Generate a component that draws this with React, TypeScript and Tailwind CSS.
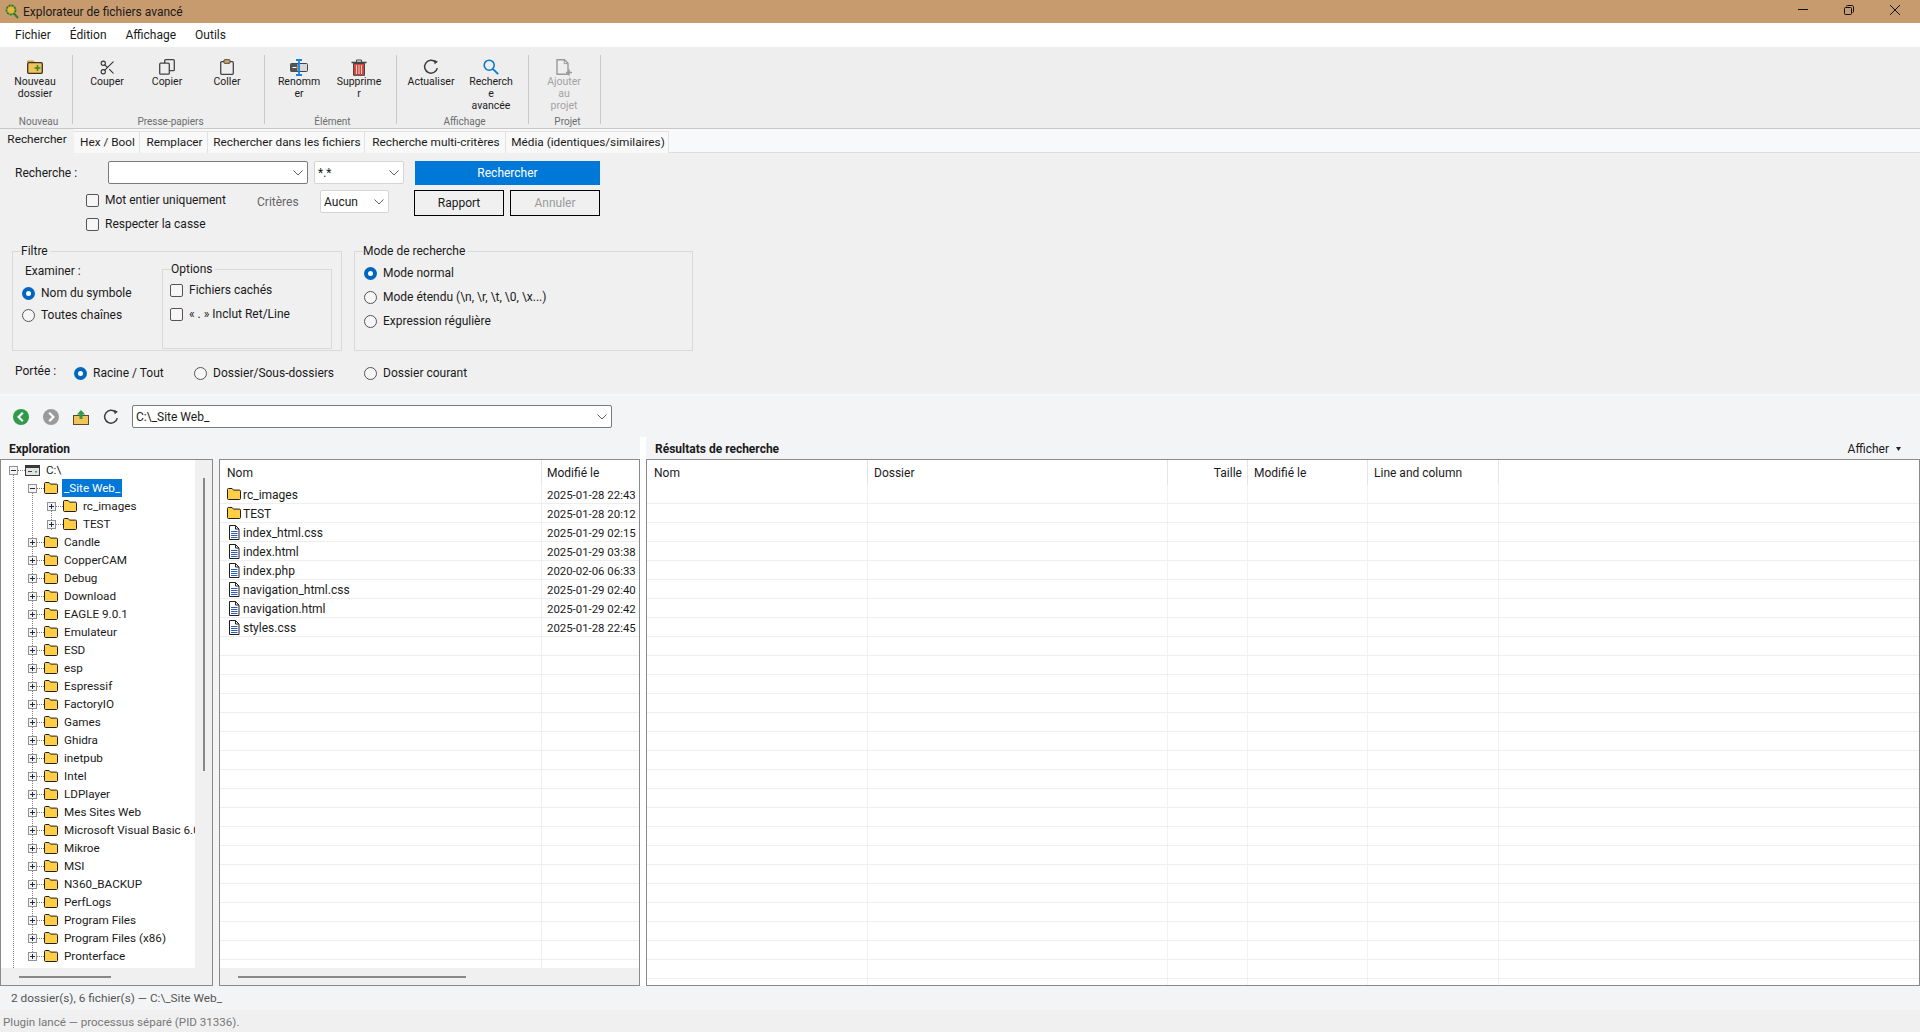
import React from "react";
import { Scissors } from "lucide-react";

const treeFolders = [
  "Candle",
  "CopperCAM",
  "Debug",
  "Download",
  "EAGLE 9.0.1",
  "Emulateur",
  "ESD",
  "esp",
  "Espressif",
  "FactoryIO",
  "Games",
  "Ghidra",
  "inetpub",
  "Intel",
  "LDPlayer",
  "Mes Sites Web",
  "Microsoft Visual Basic 6.0",
  "Mikroe",
  "MSI",
  "N360_BACKUP",
  "PerfLogs",
  "Program Files",
  "Program Files (x86)",
  "Pronterface",
];

const listRows = [
  { name: "rc_images", date: "2025-01-28 22:43", folder: true },
  { name: "TEST", date: "2025-01-28 20:12", folder: true },
  { name: "index_html.css", date: "2025-01-29 02:15" },
  { name: "index.html", date: "2025-01-29 03:38" },
  { name: "index.php", date: "2020-02-06 06:33" },
  { name: "navigation_html.css", date: "2025-01-29 02:40" },
  { name: "navigation.html", date: "2025-01-29 02:42" },
  { name: "styles.css", date: "2025-01-28 22:45" },
];

const levelPad = ["pl-[8px]", "pl-[27px]", "pl-[46px]"];

function Chevron() {
  return (
    <svg width="10" height="6" viewBox="0 0 10 6" className="shrink-0">
      <path d="M.5.5 5 5 9.500.5" fill="none" stroke="#606060" />
    </svg>
  );
}

function FolderIcon() {
  return (
    <svg width="14" height="12" viewBox="0 0 14 12" className="shrink-0">
      <path d="M.5 1.500c0-.6.4-1 1-1h3.600l1.400 1.600h6c.6 0 1 .4 1 1v7.400c0 .6-.4 1-1 1h-11c-.6 0-1-.4-1-1z" fill="#FFCE45" stroke="#1f1f1f" />
    </svg>
  );
}

function FileIcon() {
  return (
    <svg width="12" height="15" viewBox="0 0 12 15" className="shrink-0">
      <path d="M1.500.5h6l3.500 3.500v10.500H1.500z" fill="#fff" stroke="#1f1f1f" />
      <path d="M7.500.5V4H11" fill="none" stroke="#1f1f1f" />
      <path d="M3 6.500h6.500M3 8.500h6.500M3 10.500h6.500M3 12.500h6.500" stroke="#2F5BB7" />
    </svg>
  );
}

function DriveIcon() {
  return (
    <svg width="15" height="11" viewBox="0 0 15 11" className="shrink-0">
      <rect x="0" y="0" width="15" height="3" fill="#3a3a3a" />
      <rect x=".5" y="2.500" width="14" height="8" fill="#e4e4e4" stroke="#3a3a3a" />
      <path d="M3 6.500h4" stroke="#444" />
      <rect x="10" y="6" width="2" height="1.500" fill="#3aa655" />
    </svg>
  );
}

function Expander({ open }: { open?: boolean }) {
  return (
    <svg width="9" height="9" viewBox="0 0 9 9" className="shrink-0">
      <rect x=".5" y=".5" width="8" height="8" fill="#f4f4f4" stroke="#929292" />
      <path d="M2 4.500h5" stroke="#1f2a44" />
      {!open && <path d="M4.500 2v5" stroke="#1f2a44" />}
    </svg>
  );
}

function RefreshIcon({ size = 16 }: { size?: number }) {
  return (
    <svg width={size} height={size} viewBox="0 0 15 15">
      <path d="M11.800 3A6 6 0 1 0 13.400 8.500" fill="none" stroke="#3c3c3c" strokeWidth="1.400" />
      <path d="M10.600 .6 14 2.600 10.800 5z" fill="#3c3c3c" />
    </svg>
  );
}

function ToolIcon({ name }: { name: string }) {
  if (name === "new")
    return (
      <svg width="16" height="14" viewBox="0 0 16 14">
        <path d="M.5 2V1h6l1 1.500" fill="#E8B64C" stroke="#C99A3A" />
        <rect x=".7" y="2.700" width="14.600" height="10.600" rx="1" fill="#F2C35A" stroke="#3a3222" strokeWidth="1.300" />
        <path d="M10.500 5v6M7.500 8h6" stroke="#2E8B2E" strokeWidth="1.600" />
      </svg>
    );
  if (name === "cut") return <Scissors size={17} strokeWidth={1.5} color="#333" />;
  if (name === "copy")
    return (
      <svg width="16" height="16" viewBox="0 0 16 16">
        <rect x="5.700" y=".7" width="9.600" height="11" rx="1" fill="none" stroke="#444" strokeWidth="1.300" />
        <rect x=".7" y="4.200" width="9.600" height="11" rx="1" fill="#eeeeee" stroke="#444" strokeWidth="1.300" />
      </svg>
    );
  if (name === "paste")
    return (
      <svg width="14" height="16" viewBox="0 0 14 16">
        <rect x=".7" y="2.700" width="12.600" height="12.600" rx="1" fill="none" stroke="#444" strokeWidth="1.300" />
        <rect x="4" y=".7" width="6" height="3.600" rx=".6" fill="#D9A95A" stroke="#444" />
      </svg>
    );
  if (name === "rename")
    return (
      <svg width="18" height="17" viewBox="0 0 18 17">
        <rect x=".5" y="4.500" width="17" height="8" rx="1" fill="#d8d8d8" stroke="#444" />
        <rect x=".5" y="4.500" width="7" height="8" fill="#555" />
        <path d="M2.500 8.500h4" stroke="#fff" />
        <path d="M6 1h6M6 16h6M9 1v15" stroke="#1683E0" strokeWidth="1.800" fill="none" />
      </svg>
    );
  if (name === "trash")
    return (
      <svg width="16" height="17" viewBox="0 0 16 17">
        <path d="M.5 3.500h15" stroke="#444" strokeWidth="1.600" />
        <path d="M5.500 3V1h5v2" fill="none" stroke="#444" />
        <path d="M2.500 4.500h11v11.800h-11z" fill="#D8453C" stroke="#444" />
        <path d="M5.500 6v9M8 6v9M10.500 6v9" stroke="#f2d0cc" />
      </svg>
    );
  if (name === "search")
    return (
      <svg width="16" height="16" viewBox="0 0 16 16">
        <circle cx="6.200" cy="6.200" r="5" fill="none" stroke="#0B78D0" strokeWidth="1.600" />
        <path d="m9.800 9.800 5.400 5.400" stroke="#0B78D0" strokeWidth="1.800" />
      </svg>
    );
  if (name === "add")
    return (
      <svg width="17" height="17" viewBox="0 0 17 17">
        <path d="M1 .8h7.500L12 4.300v10.900H1z" fill="none" stroke="#9a9a9a" strokeWidth="1.400" />
        <path d="M8.200 1v3.600H12" fill="none" stroke="#9a9a9a" />
        <path d="M13 10.500v6M10 13.500h6" stroke="#9a9a9a" strokeWidth="1.600" />
      </svg>
    );
  return <RefreshIcon />;
}

function ToolButton({ icon, lines, disabled }: { icon: string; lines: string[]; disabled?: boolean }) {
  return (
    <div className={`w-[60px] pt-[3px] flex flex-col items-center text-[10.5px] leading-[12px] ${disabled ? "text-[#a3a3a3]" : "text-[#1c1c1c]"}`}>
      <div className="h-[18px] flex items-center justify-center">
        <ToolIcon name={icon} />
      </div>
      {lines.map((l) => (
        <div key={l} className="text-center whitespace-nowrap">
          {l}
        </div>
      ))}
    </div>
  );
}

function ToolGroup({ label, pad, children }: { label: string; pad: string; children: React.ReactNode }) {
  return (
    <div className={`h-[69px] border-r border-[#c8c8c8] flex flex-col ${pad}`}>
      <div className="h-[60px] shrink-0 flex">{children}</div>
      <div className="h-[14px] shrink-0 pl-[7px] text-center text-[10px] leading-[14px] text-[#6d6d6d]">{label}</div>
    </div>
  );
}

function Combo({ width, text, dark }: { width: string; text?: string; dark?: boolean }) {
  return (
    <div className={`${width} h-[23px] flex items-center justify-between pl-[3px] pr-[4px] bg-white rounded-[2px] border ${dark ? "border-[#7a7a7a]" : "border-[#d4d4d4]"}`}>
      <span className="leading-[16px]">{text}</span>
      <Chevron />
    </div>
  );
}

function Check({ label }: { label: string }) {
  return (
    <div className="flex items-center h-[16px]">
      <div className="w-[13px] h-[13px] rounded-[2px] border border-[#555] bg-[#f6f6f6] mr-[6px]" />
      <span>{label}</span>
    </div>
  );
}

function Radio({ label, checked }: { label: string; checked?: boolean }) {
  return (
    <div className="flex items-center h-[16px]">
      {checked ? (
        <div className="w-[13px] h-[13px] rounded-full bg-[#0067C0] mr-[6px] flex items-center justify-center">
          <div className="w-[5px] h-[5px] rounded-full bg-white" />
        </div>
      ) : (
        <div className="w-[13px] h-[13px] rounded-full border border-[#555] bg-[#f6f6f6] mr-[6px]" />
      )}
      <span>{label}</span>
    </div>
  );
}

function GroupBox({ label, className, children }: { label: string; className: string; children: React.ReactNode }) {
  return (
    <div className={`relative border border-[#d9d9d9] ${className}`}>
      <span className="absolute left-[8px] top-[-9px] bg-[#f0f0f0] pr-[2px] leading-[16px]">{label}</span>
      {children}
    </div>
  );
}

function Tab({ label, width, active }: { label: string; width: string; active?: boolean }) {
  return active ? (
    <div className={`${width} h-[24px] bg-[#f0f0f0] leading-[21px] text-center shrink-0`}>{label}</div>
  ) : (
    <div className={`${width} h-[22px] mt-[2px] pl-[2px] bg-[#f9f9f9] border-t border-r border-[#e2e2e2] leading-[21px] text-center shrink-0 whitespace-nowrap`}>{label}</div>
  );
}

function TreeRow({ level, label, open, selected, icon }: { level: number; label: string; open?: boolean; selected?: boolean; icon?: React.ReactNode }) {
  return (
    <div className={`h-[18px] flex items-center whitespace-nowrap text-[11.7px] ${levelPad[level]}`}>
      <Expander open={open} />
      <div className="w-[7px] border-t border-dotted border-[#808080] shrink-0" />
      {icon ?? <FolderIcon />}
      <span className={`ml-[4px] px-[2px] leading-[18px] ${selected ? "bg-[#0078D7] text-white" : ""}`}>{label}</span>
    </div>
  );
}

function HScroll({ thumb }: { thumb: string }) {
  return (
    <div className="h-[17px] shrink-0 bg-[#f0f0f0] flex items-center">
      <div className={`h-[2px] bg-[#888888] ${thumb}`} />
    </div>
  );
}

function Tree() {
  return (
    <div className="w-[213px] h-full border border-[#8a8a8a] bg-white flex flex-col shrink-0">
      <div className="flex flex-1 min-h-0">
        <div className="relative w-[194px] pt-[1px] overflow-hidden">
          <div className="absolute left-[12px] top-[15px] bottom-0 border-l border-dotted border-[#808080]" />
          <div className="absolute left-[31px] top-[33px] bottom-[8px] border-l border-dotted border-[#808080]" />
          <div className="absolute left-[50px] top-[42px] h-[28px] border-l border-dotted border-[#808080]" />
          <div className="relative">
            <TreeRow level={0} label="C:\" open icon={<DriveIcon />} />
            <TreeRow level={1} label="_Site Web_" open selected />
            <TreeRow level={2} label="rc_images" />
            <TreeRow level={2} label="TEST" />
            {treeFolders.map((f) => (
              <TreeRow key={f} level={1} label={f} />
            ))}
          </div>
        </div>
        <div className="w-[17px] bg-[#f0f0f0] pt-[18px] flex justify-center">
          <div className="w-[2px] h-[293px] bg-[#888888]" />
        </div>
      </div>
      <HScroll thumb="ml-[18px] w-[92px]" />
    </div>
  );
}

function FileList() {
  const blanks = Array.from({ length: 18 }, (_, i) => i);
  return (
    <div className="w-[421px] h-full ml-[6px] border border-[#8a8a8a] bg-white flex flex-col">
      <div className="h-[25px] shrink-0 flex leading-[27px]">
        <div className="w-[322px] h-full pl-[7px] border-r border-[#e5e5e5]">Nom</div>
        <div className="pl-[5px]">Modifié le</div>
      </div>
      <div className="flex-1 min-h-0 overflow-hidden">
        {listRows.map((r) => (
          <div key={r.name} className="h-[19px] flex border-b border-[#eeeeee]">
            <div className="w-[322px] flex items-center pl-[5px] border-r border-[#eeeeee]">
              <div className="w-[18px] pr-[1px] flex justify-center shrink-0">{r.folder ? <FolderIcon /> : <FileIcon />}</div>
              <span className="pt-[1px]">{r.name}</span>
            </div>
            <div className="pl-[5px] text-[11.4px] leading-[20px] whitespace-nowrap">{r.date}</div>
          </div>
        ))}
        {blanks.map((i) => (
          <div key={i} className="h-[19px] flex border-b border-[#eeeeee]">
            <div className="w-[322px] border-r border-[#eeeeee]" />
          </div>
        ))}
      </div>
      <HScroll thumb="ml-[18px] w-[228px]" />
    </div>
  );
}

function Results() {
  const rows = Array.from({ length: 27 }, (_, i) => i);
  const cols = ["w-[221px]", "w-[300px]", "w-[80px]", "w-[120px]", "w-[131px]"];
  return (
    <div className="flex-1 h-full border border-[#8a8a8a] bg-white flex flex-col overflow-hidden">
      <div className="h-[25px] shrink-0 flex leading-[27px]">
        <div className="w-[221px] pl-[7px] border-r border-[#e5e5e5]">Nom</div>
        <div className="w-[300px] pl-[6px] border-r border-[#e5e5e5]">Dossier</div>
        <div className="w-[80px] pr-[5px] text-right border-r border-[#e5e5e5]">Taille</div>
        <div className="w-[120px] pl-[6px] border-r border-[#e5e5e5]">Modifié le</div>
        <div className="w-[131px] pl-[6px] border-r border-[#e5e5e5]">Line and column</div>
      </div>
      <div className="flex-1 min-h-0 overflow-hidden">
        {rows.map((i) => (
          <div key={i} className="h-[19px] flex border-b border-[#eeeeee]">
            {cols.map((c) => (
              <div key={c} className={`${c} border-r border-[#f2f2f2]`} />
            ))}
          </div>
        ))}
      </div>
    </div>
  );
}

export default function App() {
  return (
    <div className="w-[1920px] h-[1032px] overflow-hidden flex flex-col bg-[#f3f4f6] text-[#1a1a1a] text-[12px] font-['Roboto',sans-serif]">
      {/* title bar */}
      <div className="h-[23px] shrink-0 bg-[#C89B6E] flex items-center pl-[5px]">
        <svg width="14" height="15" viewBox="0 0 14 15">
          <circle cx="6" cy="6" r="4.500" fill="#E8B43C" stroke="#2E7D32" strokeWidth="1.800" strokeDasharray="2.400 .6" />
          <path d="m9 9.500 4 4.500" stroke="#2E7D32" strokeWidth="2" />
        </svg>
        <span className="ml-[4px]">Explorateur de fichiers avancé</span>
        <div className="ml-auto flex pr-[2px]">
          <div className="w-[46px] h-[23px] flex items-center justify-center pb-[4px]">
            <svg width="10" height="1" viewBox="0 0 10 1"><path d="M0 .5h10" stroke="#111" /></svg>
          </div>
          <div className="w-[46px] h-[23px] flex items-center justify-center pb-[4px]">
            <svg width="10" height="10" viewBox="0 0 10 10">
              <rect x=".5" y="2.500" width="7" height="7" rx="1" fill="none" stroke="#111" />
              <path d="M2.500 1.500c0-.6.4-1 1-1h4.500c.8 0 1.500.7 1.500 1.500V6.500c0 .6-.4 1-1 1" fill="none" stroke="#111" />
            </svg>
          </div>
          <div className="w-[46px] h-[23px] flex items-center justify-center pb-[4px]">
            <svg width="10" height="10" viewBox="0 0 10 10"><path d="m0 0 10 10M10 0 0 10" stroke="#111" /></svg>
          </div>
        </div>
      </div>

      {/* menu */}
      <div className="h-[24px] shrink-0 bg-white flex items-center pl-[15px] gap-[19px]">
        <span>Fichier</span>
        <span>Édition</span>
        <span>Affichage</span>
        <span>Outils</span>
      </div>

      {/* toolbar */}
      <div className="h-[82px] shrink-0 bg-[#eeeeee] border-b border-[#c8c8c8] flex pt-[8px]">
        <ToolGroup label="Nouveau" pad="pl-[5px] pr-[7px]">
          <ToolButton icon="new" lines={["Nouveau", "dossier"]} />
        </ToolGroup>
        <ToolGroup label="Presse-papiers" pad="pl-[4px] pr-[7px]">
          <ToolButton icon="cut" lines={["Couper"]} />
          <ToolButton icon="copy" lines={["Copier"]} />
          <ToolButton icon="paste" lines={["Coller"]} />
        </ToolGroup>
        <ToolGroup label="Élément" pad="pl-[4px] pr-[7px]">
          <ToolButton icon="rename" lines={["Renomm", "er"]} />
          <ToolButton icon="trash" lines={["Supprime", "r"]} />
        </ToolGroup>
        <ToolGroup label="Affichage" pad="pl-[4px] pr-[7px]">
          <ToolButton icon="refresh" lines={["Actualiser"]} />
          <ToolButton icon="search" lines={["Recherch", "e", "avancée"]} />
        </ToolGroup>
        <ToolGroup label="Projet" pad="pl-[5px] pr-[6px]">
          <ToolButton icon="add" lines={["Ajouter", "au", "projet"]} disabled />
        </ToolGroup>
      </div>

      {/* tabs */}
      <div className="h-[24px] shrink-0 bg-[#f8f9fa] flex border-b border-[#dddddd] text-[11.8px]">
        <Tab label="Rechercher" width="w-[74px]" active />
        <Tab label="Hex / Bool" width="w-[66px]" />
        <Tab label="Remplacer" width="w-[68px]" />
        <Tab label="Rechercher dans les fichiers" width="w-[157px]" />
        <Tab label="Recherche multi-critères" width="w-[141px]" />
        <Tab label="Média (identiques/similaires)" width="w-[163px]" />
      </div>

      {/* search panel */}
      <div className="h-[243px] shrink-0 bg-[#f8f8f8] pb-[2px]">
        <div className="h-[241px] bg-[#f0f0f0] pt-[8px] pl-[4px]">
          <div className="flex items-start pl-[11px]">
            <div className="w-[93px] leading-[24px]">Recherche :</div>
            <Combo width="w-[200px]" dark />
            <div className="ml-[6px]">
              <Combo width="w-[90px]" text="*.*" />
            </div>
            <div className="ml-[11px] w-[185px] h-[24px] bg-[#0078D7] text-white text-center leading-[24px]">Rechercher</div>
          </div>
          <div className="flex items-start pl-[82px] mt-[5px] h-[26px]">
            <div className="w-[171px] pt-[2px]">
              <Check label="Mot entier uniquement" />
            </div>
            <div className="w-[63px] pt-[3px] text-[#666666]">Critères</div>
            <Combo width="w-[69px]" text="Aucun" />
            <div className="ml-[25px] w-[90px] h-[26px] border border-black text-center leading-[24px]">Rapport</div>
            <div className="ml-[6px] w-[90px] h-[26px] border border-black text-center leading-[24px] text-[#9a9a9a]">Annuler</div>
          </div>
          <div className="pl-[82px]">
            <Check label="Respecter la casse" />
          </div>

          <div className="flex items-start pl-[8px] mt-[19px]">
            <GroupBox label="Filtre" className="w-[330px] h-[100px] flex">
              <div className="w-[149px] pl-[9px] pt-[11px]">
                <div className="ml-[3px] leading-[16px]">Examiner :</div>
                <div className="mt-[6px]">
                  <Radio label="Nom du symbole" checked />
                </div>
                <div className="mt-[6px]">
                  <Radio label="Toutes chaînes" />
                </div>
              </div>
              <GroupBox label="Options" className="w-[170px] h-[80px] mt-[17px] pl-[7px] pt-[12px]">
                <Check label="Fichiers cachés" />
                <div className="mt-[8px]">
                  <Check label="« . » Inclut Ret/Line" />
                </div>
              </GroupBox>
            </GroupBox>
            <GroupBox label="Mode de recherche" className="w-[339px] h-[100px] ml-[12px] pl-[9px] pt-[13px]">
              <Radio label="Mode normal" checked />
              <div className="mt-[8px]">
                <Radio label="Mode étendu (\n, \r, \t, \0, \x...)" />
              </div>
              <div className="mt-[8px]">
                <Radio label="Expression régulière" />
              </div>
            </GroupBox>
          </div>

          <div className="flex items-center pl-[11px] mt-[14px] h-[16px]">
            <div className="w-[59px] pb-[4px]">Portée :</div>
            <div className="w-[120px]">
              <Radio label="Racine / Tout" checked />
            </div>
            <div className="w-[170px]">
              <Radio label="Dossier/Sous-dossiers" />
            </div>
            <Radio label="Dossier courant" />
          </div>
        </div>
      </div>

      {/* navigation */}
      <div className="h-[41px] shrink-0 flex items-start pl-[13px] pt-[9px]">
        <div className="flex items-center h-[24px]">
          <svg width="16" height="16" viewBox="0 0 16 16">
            <circle cx="8" cy="8" r="8" fill="#2E9A4A" />
            <path d="M9.800 3.800 5.600 8l4.200 4.200" fill="none" stroke="#fff" strokeWidth="2.200" />
          </svg>
          <svg width="16" height="16" viewBox="0 0 16 16" className="ml-[14px]">
            <circle cx="8" cy="8" r="8" fill="#9a9a9a" />
            <path d="M6.200 3.800 10.400 8l-4.200 4.200" fill="none" stroke="#fff" strokeWidth="2.200" />
          </svg>
          <svg width="16" height="16" viewBox="0 0 16 16" className="ml-[14px]">
            <rect x=".5" y="6.500" width="15" height="9" fill="#F2C35A" stroke="#5a4a2a" />
            <path d="M8 1 3.800 5.500h2.700V10h3V5.500h2.700z" fill="#2E9A4A" />
          </svg>
          <div className="ml-[14px] flex">
            <RefreshIcon />
          </div>
        </div>
        <div className="ml-[13px] w-[480px] h-[23px] flex items-center justify-between pl-[3px] pr-[4px] bg-white rounded-[2px] border border-[#7a7a7a]">
          <span>C:\_Site Web_</span>
          <Chevron />
        </div>
      </div>

      {/* panes */}
      <div className="h-[549px] shrink-0 flex">
        <div className="w-[640px] flex flex-col shrink-0">
          <div className="h-[22px] shrink-0 pl-[9px] font-bold leading-[24px]">Exploration</div>
          <div className="flex-1 min-h-0 flex">
            <Tree />
            <FileList />
          </div>
        </div>
        <div className="w-[6px] bg-white shrink-0" />
        <div className="flex-1 flex flex-col min-w-0">
          <div className="h-[22px] shrink-0 flex items-center pl-[9px] pr-[19px] pt-[2px]">
            <span className="font-bold">Résultats de recherche</span>
            <span className="ml-auto">Afficher</span>
            <svg width="5" height="4" viewBox="0 0 5 4" className="ml-[7px]">
              <path d="M0 0h5L2.500 4z" fill="#222" />
            </svg>
          </div>
          <div className="flex-1 min-h-0 flex">
            <Results />
          </div>
        </div>
      </div>

      {/* status */}
      <div className="h-[24px] shrink-0 pl-[11px] text-[11.8px] leading-[24px] text-[#555555]">2 dossier(s), 6 fichier(s) — C:\_Site Web_</div>
      <div className="flex-1 bg-[#f0f0f0] pl-[3px] text-[11.6px] leading-[24px] text-[#777777]">Plugin lancé — processus séparé (PID 31336).</div>
    </div>
  );
}
